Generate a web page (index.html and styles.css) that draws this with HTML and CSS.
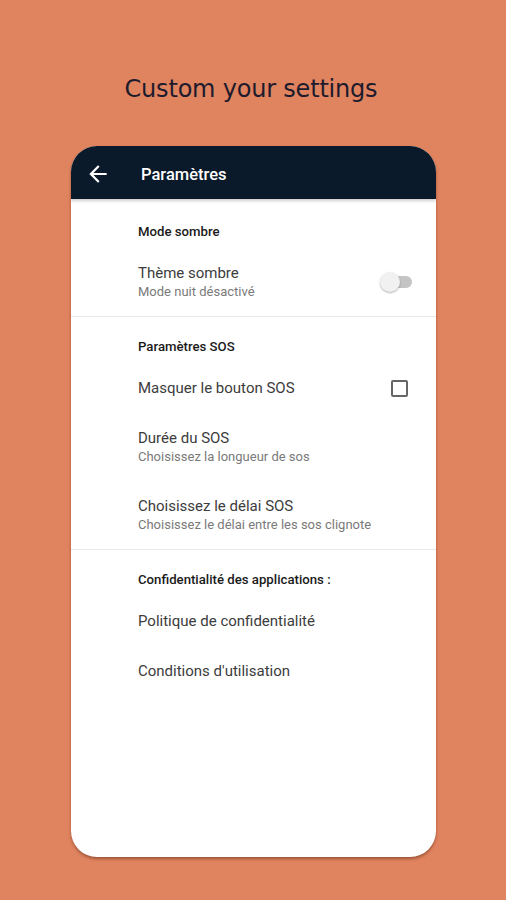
FILE: index.html
```html
<!DOCTYPE html>
<html lang="fr">
<head>
	<meta charset="utf-8">
	<title>Paramètres</title>
	<link rel="stylesheet" href="styles.css">
</head>
<body>
<div class="page">
	<h1 class="headline">Custom your settings</h1>

	<div class="phone">
		<div class="appbar">
			<svg class="back" width="26" height="26" viewBox="0 0 24 24">
				<path d="M20 11H7.83l5.59-5.59L12 4l-8 8 8 8 1.41-1.41L7.83 13H20v-2z" fill="#fff"/>
			</svg>
			<span class="appbar-title">Paramètres</span>
		</div>

		<div class="group first">
			<div class="group-title">Mode sombre</div>
			<div class="row">
				<div class="row-text">
					<div class="row-main">Thème sombre</div>
					<div class="row-sub">Mode nuit désactivé</div>
				</div>
				<div class="switch"><span class="knob"></span></div>
			</div>
		</div>

		<div class="group">
			<div class="group-title">Paramètres SOS</div>
			<div class="row">
				<div class="row-text">
					<div class="row-main">Masquer le bouton SOS</div>
				</div>
				<span class="check"></span>
			</div>
			<div class="row">
				<div class="row-text">
					<div class="row-main">Durée du SOS</div>
					<div class="row-sub">Choisissez la longueur de sos</div>
				</div>
			</div>
			<div class="row">
				<div class="row-text">
					<div class="row-main">Choisissez le délai SOS</div>
					<div class="row-sub">Choisissez le délai entre les sos clignote</div>
				</div>
			</div>
		</div>

		<div class="group last">
			<div class="group-title">Confidentialité des applications :</div>
			<div class="row">
				<div class="row-main">Politique de confidentialité</div>
			</div>
			<div class="row">
				<div class="row-main">Conditions d'utilisation</div>
			</div>
		</div>
	</div>
</div>
</body>
</html>
```

FILE: styles.css
```css
html, body {
	margin: 0;
	background: #e0835f;
}

body {
	font-family: Roboto, "Liberation Sans", sans-serif;
}

.page {
	width: 506px;
	height: 900px;
	display: flex;
	flex-direction: column;
	align-items: center;
}

.headline {
	margin: 75px 0 43px;
	font-family: "DejaVu Sans", sans-serif;
	font-weight: normal;
	font-size: 24px;
	color: #1d1b2c;
	letter-spacing: -0.2px;
	margin-left: -4px;
}

.phone {
	width: 365px;
	height: 711px;
	margin-left: 1px;
	background: #fff;
	border-radius: 26px;
	overflow: hidden;
	box-shadow: 0 2px 3px rgba(80, 30, 10, 0.45);
}

.appbar {
	height: 49px;
	padding-top: 4px;
	background: #0b1a2a;
	display: flex;
	align-items: center;
	padding-left: 14px;
	box-shadow: 0 2px 3px rgba(0, 0, 0, 0.2);
}

.back {
	margin-right: 30px;
	margin-top: -2px;
}

.appbar-title {
	color: #fff;
	font-size: 16.5px;
	font-weight: 500;
}

.group {
	padding: 22px 0 0 67px;
	border-bottom: 1px solid #e8e8e8;
}

.group.first {
	padding-top: 25px;
}

.group.last {
	border-bottom: none;
}

.group-title {
	font-size: 13.2px;
	line-height: 16px;
	font-weight: 500;
	color: #1a1a1a;
	margin-bottom: 8px;
}

.row {
	display: flex;
	align-items: center;
	justify-content: space-between;
	padding: 15px 28px 15px 0;
}

.row-main {
	font-size: 15px;
	line-height: 20px;
	color: #3c3c3c;
}

.row-sub {
	font-size: 13px;
	line-height: 18px;
	color: #7a7a7a;
}

.switch {
	position: relative;
	width: 28px;
	height: 12px;
	border-radius: 6px;
	background: #c4c4c4;
	margin-right: -4px;
}

.knob {
	position: absolute;
	left: -4px;
	top: -4px;
	width: 20px;
	height: 20px;
	border-radius: 50%;
	background: #f1f1f1;
	box-shadow: 0 1px 2px rgba(0, 0, 0, 0.3);
}

.check {
	width: 13px;
	height: 13px;
	border: 2px solid #666;
	border-radius: 2px;
}
```
